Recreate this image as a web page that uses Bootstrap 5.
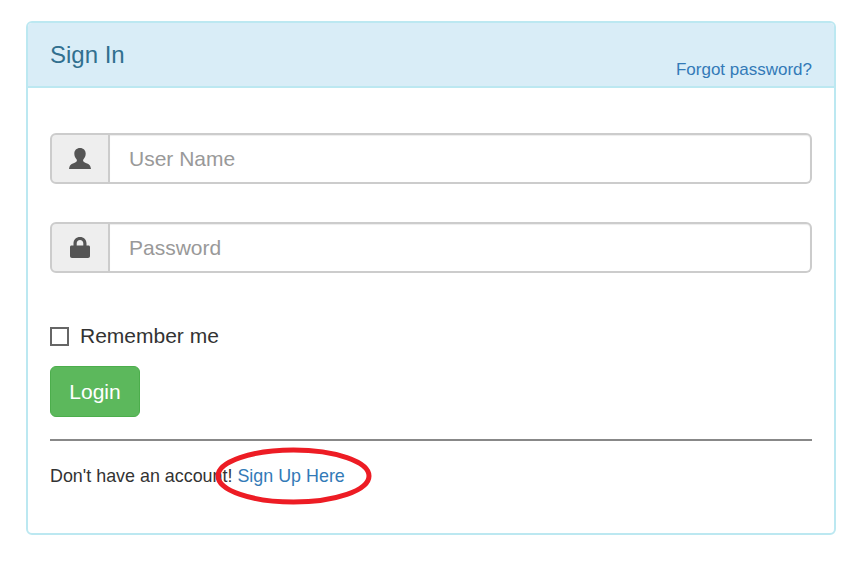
<!DOCTYPE html>
<html lang="en">

<head>
	<meta charset="UTF-8">
	<title>Sign In</title>
	<link href="https://cdn.jsdelivr.net/npm/bootstrap@5.3.3/dist/css/bootstrap.min.css" rel="stylesheet">
	<style>
		body {
			background-color: #fff;
			color: #333;
			font-family: "Liberation Sans", Arial, sans-serif;
		}

		.login-wrap {
			padding: 21px 18px 30px 26px;
		}

		.login-card {
			height: 514px;
			border: 2px solid #bce8f1;
			border-radius: 6px;
			--bs-card-inner-border-radius: 4px;
		}

		.login-head {
			height: 65px;
			padding: 0 22px 7px;
			background-color: #d9edf7;
			border-bottom: 2px solid #bce8f1;
		}

		.login-title {
			margin: 0;
			padding-top: 9px;
			color: #31708f;
			font-size: 24px;
			line-height: 1.1;
			align-self: center;
		}

		.login-head a,
		.signup-row a {
			color: #337ab7;
			text-decoration: none;
		}

		.login-head a {
			font-size: 17px;
			line-height: 18px;
		}

		.login-body {
			position: relative;
			padding: 45px 22px 0;
		}

		.field-group {
			height: 51px;
			margin-bottom: 38px;
		}

		.field-group .input-group-text {
			width: 60px;
			justify-content: center;
			padding: 0;
			background-color: #eee;
			border: 2px solid #ccc;
			border-radius: 6px 0 0 6px;
		}

		.field-group .form-control {
			margin-left: 0 !important;
			padding: 0 19px;
			color: #555;
			font-size: 21px;
			border: 2px solid #ccc;
			border-left: 0;
			border-radius: 0 6px 6px 0;
			box-shadow: inset 0 1px 1px rgba(0, 0, 0, .075);
		}

		.field-group .form-control::placeholder {
			color: #999;
			opacity: 1;
		}

		.remember-row {
			margin-top: 51px;
			margin-bottom: 18px;
			height: 19px;
			font-size: 21px;
		}

		.remember-row .form-check-input {
			width: 19px;
			height: 19px;
			margin: 0 11px 0 0;
			border: 2px solid #666;
			border-radius: 0;
		}

		.login-btn {
			width: 90px;
			height: 51px;
			padding: 0;
			color: #fff;
			font-size: 21px;
			background-color: #5cb85c;
			border: 1px solid #4cae4c;
			border-radius: 6px;
		}

		.login-rule {
			margin: 22px 0 23px;
			border: 0;
			border-top: 2px solid #888;
			opacity: 1;
		}

		.signup-row {
			font-size: 17.9px;
			line-height: 24px;
		}

		.red-ring {
			position: absolute;
			left: 186px;
			top: 358px;
			width: 159px;
			height: 60px;
		}
	</style>
</head>

<body>
	<div class="login-wrap">
		<div class="card login-card">
			<div class="card-header login-head d-flex justify-content-between align-items-end">
				<h3 class="login-title">Sign In</h3>
				<a href="#">Forgot password?</a>
			</div>
			<div class="card-body login-body">
				<form>
					<div class="input-group field-group">
						<span class="input-group-text">
							<svg width="22" height="21" viewBox="0 0 22 21" fill="#555">
								<path d="M11 0C7.600 0 5.300 2.300 5.300 5.600c0 2.400.9 4.300 2.200 5.700.5.500.5 1.300.2 2-.4.900-1.500 1.300-3.100 1.900C2.300 16 .5 16.900 0 21h22c-.5-4.100-2.300-5-4.600-5.800-1.600-.6-2.700-1-3.100-1.900-.3-.7-.3-1.500.2-2 1.300-1.400 2.200-3.300 2.200-5.700C16.700 2.300 14.400 0 11 0z"/>
							</svg>
						</span>
						<input type="text" class="form-control" placeholder="User Name">
					</div>
					<div class="input-group field-group">
						<span class="input-group-text">
							<svg width="20" height="21" viewBox="0 0 20 21" fill="#555">
								<path fill-rule="evenodd" d="M3.500 8.500V6.500C3.500 2.600 6.200 0 10 0s6.500 2.600 6.500 6.500v2h2c.9 0 1.500.6 1.500 1.500v9c0 1.200-.8 2-2 2H2c-1.200 0-2-.8-2-2v-9c0-.9.600-1.500 1.500-1.500h2zm3.200 0h6.600V6.500C13.300 4.500 11.900 3.100 10 3.100S6.700 4.500 6.700 6.500v2z"/>
							</svg>
						</span>
						<input type="password" class="form-control" placeholder="Password">
					</div>
					<div class="form-check remember-row d-flex align-items-center ps-0">
						<input class="form-check-input" type="checkbox" id="rememberMe">
						<label class="form-check-label" for="rememberMe">Remember me</label>
					</div>
					<button type="button" class="btn login-btn">Login</button>
					<hr class="login-rule">
					<div class="signup-row">Don't have an account! <a href="#">Sign Up Here</a></div>
				</form>
				<svg class="red-ring" viewBox="0 0 159 60" fill="none">
					<ellipse cx="79.500" cy="30" rx="75.500" ry="26" stroke="#ed1c24" stroke-width="5"/>
				</svg>
			</div>
		</div>
	</div>
	<script src="https://cdn.jsdelivr.net/npm/bootstrap@5.3.3/dist/js/bootstrap.bundle.min.js"></script>
</body>

</html>
